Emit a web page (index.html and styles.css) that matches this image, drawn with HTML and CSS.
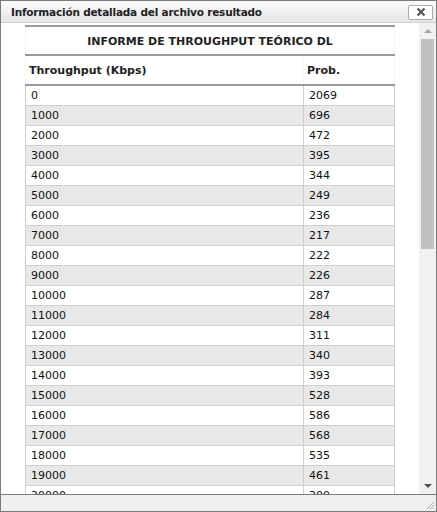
FILE: index.html
```html
<!DOCTYPE html>
<html>
<head>
<meta charset="utf-8">
<link rel="stylesheet" href="styles.css">
</head>
<body>
<div class="win">
  <div class="titlebar">
    <span class="title">Información detallada del archivo resultado</span>
    <span class="close">
      <svg width="10" height="10" viewBox="0 0 10 10"><path d="M1.5 1.5 L8.5 8.5 M8.5 1.5 L1.5 8.5" stroke="#555" stroke-width="2.2" stroke-linecap="butt"/></svg>
    </span>
  </div>
  <div class="body">
    <div class="pane">
      <table class="report">
        <colgroup><col class="col1"><col class="col2"></colgroup>
        <thead>
          <tr class="cap"><th colspan="2">INFORME DE THROUGHPUT TEÓRICO DL</th></tr>
          <tr class="hdr"><th class="c1">Throughput (Kbps)</th><th class="c2">Prob.</th></tr>
        </thead>
        <tbody>
          <tr><td>0</td><td>2069</td></tr>
          <tr><td>1000</td><td>696</td></tr>
          <tr><td>2000</td><td>472</td></tr>
          <tr><td>3000</td><td>395</td></tr>
          <tr><td>4000</td><td>344</td></tr>
          <tr><td>5000</td><td>249</td></tr>
          <tr><td>6000</td><td>236</td></tr>
          <tr><td>7000</td><td>217</td></tr>
          <tr><td>8000</td><td>222</td></tr>
          <tr><td>9000</td><td>226</td></tr>
          <tr><td>10000</td><td>287</td></tr>
          <tr><td>11000</td><td>284</td></tr>
          <tr><td>12000</td><td>311</td></tr>
          <tr><td>13000</td><td>340</td></tr>
          <tr><td>14000</td><td>393</td></tr>
          <tr><td>15000</td><td>528</td></tr>
          <tr><td>16000</td><td>586</td></tr>
          <tr><td>17000</td><td>568</td></tr>
          <tr><td>18000</td><td>535</td></tr>
          <tr><td>19000</td><td>461</td></tr>
          <tr><td>20000</td><td>309</td></tr>
        </tbody>
      </table>
    </div>
    <div class="scrollbar">
      <div class="arrow up"></div>
      <div class="track"><div class="thumb"></div></div>
      <div class="arrow down"></div>
    </div>
  </div>
  <div class="footer">
    <svg class="grip" width="10" height="10" viewBox="0 0 10 10"><path d="M9 2 L2 9 M9 5 L5 9 M9 8 L8 9" stroke="#aaa" stroke-width="1"/></svg>
  </div>
</div>
</body>
</html>
```
FILE: styles.css
```css
* { box-sizing: border-box; }
html, body { margin: 0; padding: 0; }
body {
  font-family: "DejaVu Sans", Verdana, sans-serif;
  font-size: 11px;
  color: #111;
  background: #fff;
}
.win {
  width: 437px;
  height: 512px;
  border: 1px solid #7a7a7a;
  display: flex;
  flex-direction: column;
  background: #fff;
}
.titlebar {
  height: 22px;
  flex: none;
  display: flex;
  align-items: center;
  justify-content: space-between;
  padding: 0 3px 0 10px;
  background: linear-gradient(#fbfbfb, #e6e6e6);
  border-bottom: 1px solid #d0d0d0;
}
.title {
  font-weight: bold;
  font-size: 10.5px;
  color: #222;
  letter-spacing: -0.2px;
}
.close {
  width: 25px;
  height: 15px;
  margin-top: 1px;
  border: 1px solid #aaa;
  border-radius: 2px;
  background: #fff;
  display: flex;
  align-items: center;
  justify-content: center;
}
.body {
  flex: 1;
  display: flex;
  min-height: 0;
  border-bottom: 1px solid #7a7a7a;
}
.pane {
  flex: 1;
  overflow: hidden;
  padding: 2px 23px 0 24px;
}
.report {
  width: 370px;
  border-collapse: collapse;
  table-layout: fixed;
}
.col1 { width: 278px; }
.report th {
  font-weight: bold;
  color: #222;
}
.cap th {
  height: 29px;
  border-top: 2px solid #999;
  border-bottom: 2px solid #999;
  border-left: 1px solid #fafaea;
  border-right: 1px solid #fafaea;
  text-align: center;
  padding: 2px 0 0 0;
  background: #fff;
}
.hdr th {
  height: 30px;
  background: #fff;
  border-bottom: 2px solid #999;
  text-align: left;
  padding: 1px 0 0 3px;
}
.hdr .c1 { border-left: 1px solid #fafaea; }
.hdr .c2 { border-left: 1px solid #fafaea; border-right: 1px solid #fafaea; }
.report td {
  height: 20px;
  padding: 0 0 0 5px;
  border: 1px solid #cfcfcf;
  color: #111;
}
.report tbody tr:nth-child(even) td { background: #e8e8e8; }
.scrollbar {
  width: 17px;
  flex: none;
  background: #f1f1f1;
  display: flex;
  flex-direction: column;
  padding: 0 1px 0 2px;
}
.arrow {
  height: 16px;
  flex: none;
  display: flex;
  align-items: center;
  justify-content: center;
}
.arrow::before {
  content: "";
  width: 0; height: 0;
  border-left: 4px solid transparent;
  border-right: 4px solid transparent;
}
.arrow.up::before { border-bottom: 4px solid #a3a3a3; }
.arrow.down::before { border-top: 4px solid #505050; }
.track {
  flex: 1;
}
.thumb {
  width: 13px;
  height: 210px;
  background: #c1c1c1;
}
.footer {
  height: 16px;
  flex: none;
  background: #f0f0f0;
  display: flex;
  justify-content: flex-end;
  align-items: flex-end;
  padding: 0 1px 1px 0;
}
```
